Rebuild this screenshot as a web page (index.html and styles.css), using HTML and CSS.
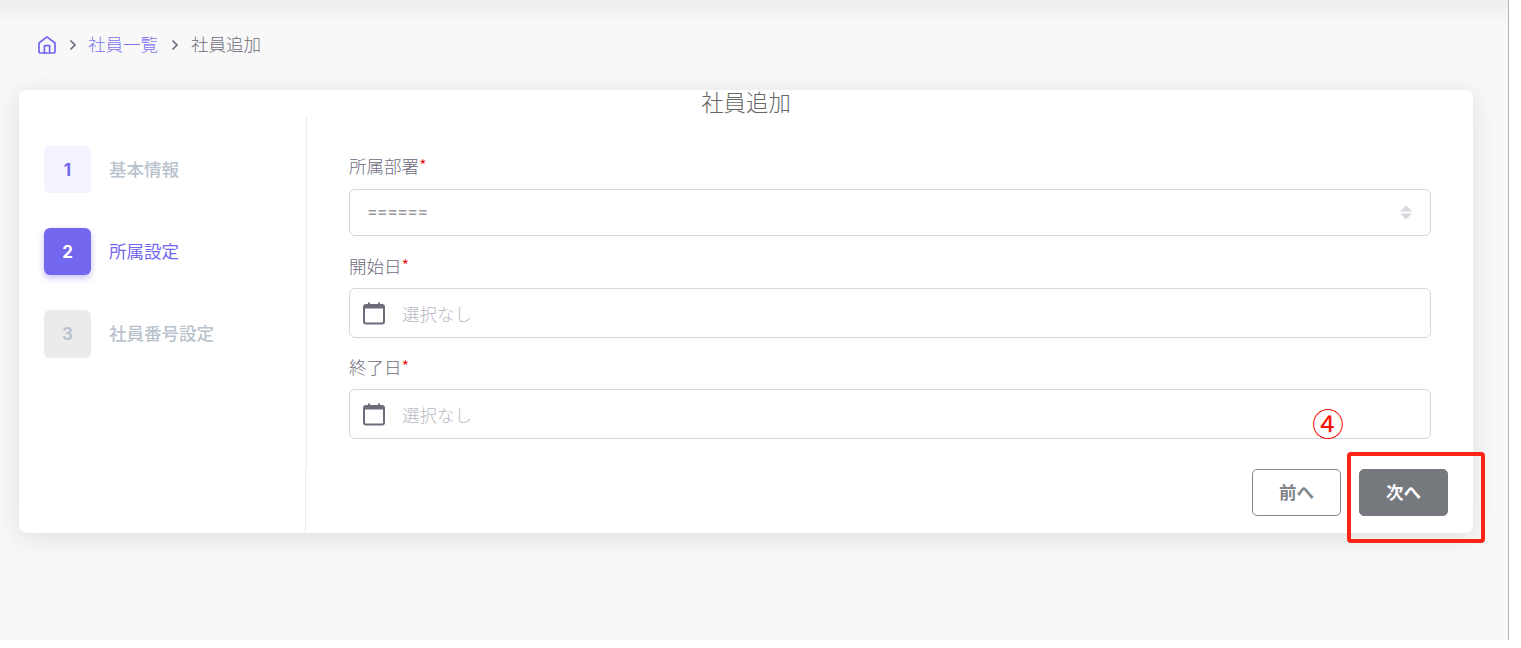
FILE: index.html
```html
<!DOCTYPE html>
<html lang="ja">
<head>
    <meta charset="UTF-8">
    <meta name="viewport" content="width=device-width, initial-scale=1.0">
    <title>社員追加</title>
    <link rel="stylesheet" href="styles.css">
</head>
<body>
    <div class="screen">
        <div class="topbar"></div>

        <nav class="breadcrumb">
            <svg class="home-icon" width="20" height="20" viewBox="0 0 20 20" fill="none" stroke="#7367f0" stroke-width="1.7" stroke-linejoin="round" stroke-linecap="round">
                <path d="M2 8 L10 1.8 L18 8 V16.2 A1.8 1.8 0 0 1 16.2 18 H3.8 A1.8 1.8 0 0 1 2 16.2 Z"/>
                <path d="M7.4 18 V10.6 H12.6 V18"/>
            </svg>
            <svg class="chevron" width="8" height="12" viewBox="0 0 8 12" fill="none" stroke="#6e6b7b" stroke-width="1.7"><path d="M1.5 1.5 L6 6 L1.5 10.5"/></svg>
            <a class="crumb-link">社員一覧</a>
            <svg class="chevron" width="8" height="12" viewBox="0 0 8 12" fill="none" stroke="#6e6b7b" stroke-width="1.7"><path d="M1.5 1.5 L6 6 L1.5 10.5"/></svg>
            <span class="crumb-current">社員追加</span>
        </nav>

        <div class="card">
            <h2 class="card-title">社員追加</h2>
            <div class="card-body">
                <div class="sidebar">
                    <div class="steps">
                        <div class="step done">
                            <div class="step-num">1</div>
                            <div class="step-label">基本情報</div>
                        </div>
                        <div class="step active">
                            <div class="step-num">2</div>
                            <div class="step-label">所属設定</div>
                        </div>
                        <div class="step todo">
                            <div class="step-num">3</div>
                            <div class="step-label">社員番号設定</div>
                        </div>
                    </div>
                    <div class="sidebar-foot"></div>
                </div>

                <div class="content">
                    <div class="field-select">
                        <label class="field-label">所属部署<span class="req">*</span></label>
                        <div class="select-box">
                            <span class="select-value">======</span>
                            <svg width="14" height="15" viewBox="0 0 14 15" fill="#d8d6de"><path d="M7 0.5 L13 6.5 H1 Z"/><path d="M1 8.5 H13 L7 14.5 Z"/></svg>
                        </div>
                    </div>

                    <div class="field-date">
                        <label class="field-label">開始日<span class="req">*</span></label>
                        <div class="date-box">
                            <svg width="24" height="24" viewBox="0 0 24 24" fill="none"><rect x="2" y="4" width="20" height="18.5" rx="2" stroke="#6e6b7b" stroke-width="2"/><path d="M2 4 H22 V7.5 H2 Z" fill="#6e6b7b"/><path d="M7 1.5 V4 M17 1.5 V4" stroke="#6e6b7b" stroke-width="2"/></svg>
                            <span class="placeholder">選択なし</span>
                        </div>
                    </div>

                    <div class="field-date field-last">
                        <label class="field-label">終了日<span class="req">*</span></label>
                        <div class="date-box">
                            <svg width="24" height="24" viewBox="0 0 24 24" fill="none"><rect x="2" y="4" width="20" height="18.5" rx="2" stroke="#6e6b7b" stroke-width="2"/><path d="M2 4 H22 V7.5 H2 Z" fill="#6e6b7b"/><path d="M7 1.5 V4 M17 1.5 V4" stroke="#6e6b7b" stroke-width="2"/></svg>
                            <span class="placeholder">選択なし</span>
                        </div>
                    </div>

                    <div class="actions">
                        <button class="btn-prev">前へ</button>
                        <button class="btn-next">次へ</button>
                    </div>
                </div>
            </div>
        </div>

        <!-- annotation drawn over the screenshot -->
        <div class="note-mark">④</div>
        <div class="note-box"></div>
    </div>
</body>
</html>
```

FILE: styles.css
```css
* {
    box-sizing: border-box;
}

html, body {
    margin: 0;
    padding: 0;
    background-color: #fff;
}

body {
    font-family: "Noto Sans CJK JP", sans-serif;
    font-size: 17.5px;
    font-weight: 300;
    color: #6e6b7b;
    overflow: hidden;
}

.screen {
    position: relative;
    width: 1509px;
    height: 640px;
    background-color: #f8f8f8;
    border-right: 1px solid #b5b5b5;
    overflow: hidden;
}

.topbar {
    height: 0;
    box-shadow: 0 0 20px 5px rgba(34, 41, 47, 0.14);
}

.breadcrumb {
    display: flex;
    align-items: center;
    height: 24px;
    margin: 33px 0 0 37px;
}

.home-icon {
    margin-right: 12px;
    margin-top: -1px;
}

.chevron {
    margin-right: 12px;
}

.crumb-link {
    color: #7f74f1;
    margin-right: 13px;
    margin-left: -1px;
    padding-bottom: 3px;
}

.crumb-current {
    padding-bottom: 3px;
}

.card {
    width: 1454px;
    margin: 33px 0 0 19px;
    height: 443px;
    background-color: #fff;
    border-radius: 8px;
    box-shadow: 0 4px 24px 0 rgba(34, 41, 47, 0.12);
}

.card-title {
    height: 27px;
    margin: 0;
    font-size: 22.4px;
    font-weight: 300;
    line-height: 23px;
    text-align: center;
    color: #666;
}

.card-body {
    display: flex;
}

.sidebar {
    width: 288px;
    height: 416px;
}

.steps {
    height: 351px;
    padding: 29px 0 0 25px;
    border-right: 1px solid #ebe9f1;
    display: flex;
    flex-direction: column;
    gap: 35px;
}

.sidebar-foot {
    width: 287px;
    height: 65px;
    border-right: 1px solid #ebe9f1;
}

.step {
    display: flex;
    align-items: center;
    gap: 18px;
    font-weight: 500;
}

.step-num {
    width: 47px;
    height: 47px;
    border-radius: 6px;
    display: flex;
    align-items: center;
    justify-content: center;
    font-family: "Inter", sans-serif;
    font-size: 17px;
    font-weight: 700;
}

.step-label {
    color: #b9c3cd;
    padding-bottom: 3px;
}

.step.done .step-num {
    background-color: #f4f2ff;
    color: #7367f0;
}

.step.active .step-num {
    background-color: #7367f0;
    color: #fff;
    box-shadow: 0 3px 6px 0 rgba(115, 103, 240, 0.4);
}

.step.active .step-label {
    color: #7367f0;
    font-weight: 400;
}

.step.todo .step-num {
    height: 48px;
    background-color: #ebebeb;
    color: #b9c3cd;
}

.content {
    width: 1166px;
    padding: 38px 42px 0 42px;
}

.field-label {
    display: block;
    height: 24px;
    line-height: 22px;
    margin-bottom: 10px;
}

.field-date .field-label {
    line-height: 24px;
}

.req {
    color: #ea0000;
}

.field-select {
    margin-bottom: 18px;
}

.field-date {
    margin-bottom: 17px;
}

.field-last {
    margin-bottom: 30px;
}

.select-box {
    height: 47px;
    border: 1px solid #d8d6de;
    border-radius: 6px;
    padding: 0 17px;
    display: flex;
    align-items: center;
    justify-content: space-between;
}

.select-value {
    font-family: "Inter", sans-serif;
    font-size: 16px;
    font-weight: 500;
    letter-spacing: -0.6px;
    color: #9b9aa3;
    padding-bottom: 4px;
}

.date-box {
    height: 50px;
    border: 1px solid #d8d6de;
    border-radius: 6px;
    padding: 0 12px;
    display: flex;
    align-items: center;
    gap: 16px;
}

.placeholder {
    color: #b9b9c3;
}

.actions {
    display: flex;
    justify-content: flex-end;
    gap: 18px;
    margin-right: -17px;
}

.actions button {
    width: 89px;
    height: 47px;
    padding: 0 0 3px 0;
    border-radius: 5px;
    font-family: inherit;
    font-size: 17.5px;
    font-weight: 600;
    cursor: pointer;
}

.btn-prev {
    background-color: #fff;
    border: 1px solid #82868b;
    color: #82868b;
}

.btn-next {
    background-color: #75787d;
    border: 1px solid #75787d;
    color: #fff;
}

.note-mark {
    position: absolute;
    left: 1312px;
    top: 402px;
    width: 32px;
    height: 40px;
    line-height: 40px;
    text-align: center;
    font-size: 32px;
    font-weight: 400;
    color: #f5140a;
}

.note-box {
    position: absolute;
    left: 1347px;
    top: 452px;
    width: 138px;
    height: 91px;
    border: 4px solid #fb2417;
    border-radius: 4px;
}
```
